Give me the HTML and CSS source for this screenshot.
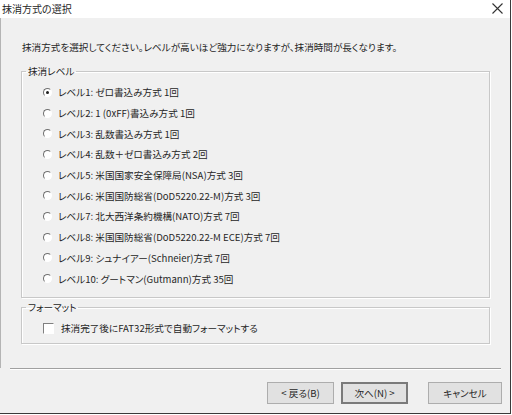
FILE: index.html
```html
<html>
	<head>
		<meta charset="utf-8">
		<link rel="stylesheet" href="styles.css">
	</head>
	<body>
		<div class="window">
			<div class="titlebar">
				<span class="title">抹消方式の選択</span>
				<svg class="close" width="11" height="11" viewBox="0 0 11 11">
					<path d="M0.5 0.5 L10.5 10.5 M10.5 0.5 L0.5 10.5" stroke="#333" stroke-width="1.1" fill="none"/>
				</svg>
			</div>
			<div class="content">
				<div class="intro">抹消方式を選択してください。レベルが高いほど強力になりますが、抹消時間が長くなります。</div>
				<fieldset class="group levels">
					<legend>抹消レベル</legend>
					<div class="option"><span class="radio checked"></span>レベル1: ゼロ書込み方式 1回</div>
					<div class="option"><span class="radio"></span>レベル2: 1 (0xFF)書込み方式 1回</div>
					<div class="option"><span class="radio"></span>レベル3: 乱数書込み方式 1回</div>
					<div class="option"><span class="radio"></span>レベル4: 乱数＋ゼロ書込み方式 2回</div>
					<div class="option"><span class="radio"></span>レベル5: 米国国家安全保障局(NSA)方式 3回</div>
					<div class="option"><span class="radio"></span>レベル6: 米国国防総省(DoD5220.22-M)方式 3回</div>
					<div class="option"><span class="radio"></span>レベル7: 北大西洋条約機構(NATO)方式 7回</div>
					<div class="option"><span class="radio"></span>レベル8: 米国国防総省(DoD5220.22-M ECE)方式 7回</div>
					<div class="option"><span class="radio"></span>レベル9: シュナイアー(Schneier)方式 7回</div>
					<div class="option"><span class="radio"></span>レベル10: グートマン(Gutmann)方式 35回</div>
				</fieldset>
				<fieldset class="group format">
					<legend>フォーマット</legend>
					<div class="option"><span class="check"></span>抹消完了後にFAT32形式で自動フォーマットする</div>
				</fieldset>
			</div>
			<div class="separator"></div>
			<div class="buttons">
				<button class="btn back">&lt; 戻る(B)</button>
				<button class="btn next">次へ(N) &gt;</button>
				<button class="btn cancel">キャンセル</button>
			</div>
		</div>
	</body>
</html>
```
FILE: styles.css
```css
html, body {
	margin: 0;
	padding: 0;
	background: #ffffff;
	font-family: "Noto Sans CJK JP", "Noto Sans", sans-serif;
	color: #262626;
}
.window {
	width: 510px;
	height: 413px;
	background: #f0f0f0;
	border-right: 1px solid #3a3a3a;
	border-bottom: 1px solid #3a3a3a;
	display: flex;
	flex-direction: column;
	box-sizing: content-box;
}
.titlebar {
	height: 18px;
	background: #ffffff;
	display: flex;
	align-items: center;
	justify-content: space-between;
	padding: 0 7px 0 2px;
}
.title {
	font-size: 10px;
	line-height: 12px;
	font-feature-settings: "palt";
}
.close {
	margin-top: -1px;
}
.content {
	flex: 1;
	border-left: 1px solid #b4b4b4;
	padding: 0 0 0 20px;
	font-size: 9.6px;
	font-feature-settings: "palt";
}
.intro {
	margin: 23px 0 0 1px;
	line-height: 12px;
	height: 12px;
}
.group {
	width: 469px;
	margin: 0;
	padding: 0;
	border: 1px solid #c8c8c8;
	box-shadow: inset 1px 1px 0 #ffffff, 1px 1px 0 #ffffff;
	min-inline-size: 0;
}
.group legend {
	font-size: 9.6px;
	line-height: 12px;
	padding: 0 2px;
	margin-left: 4px;
}
.levels {
	margin-top: 12px;
	height: 233px;
	box-sizing: border-box;
	padding-top: 5px;
}
.format {
	margin-top: 3px;
	height: 43px;
	box-sizing: border-box;
	padding-top: 5px;
}
.option {
	height: 20.7px;
	display: flex;
	align-items: center;
	padding-left: 21px;
	white-space: nowrap;
}
.radio {
	width: 7px;
	height: 7px;
	border-radius: 50%;
	border: 1px solid;
	border-color: #707070 #ffffff #ffffff #707070;
	background: #ffffff;
	margin-right: 6px;
	display: flex;
	align-items: center;
	justify-content: center;
}
.radio.checked::after {
	content: "";
	width: 3px;
	height: 3px;
	border-radius: 50%;
	background: #1e1e1e;
}
.check {
	width: 9px;
	height: 9px;
	border: 1px solid;
	border-color: #808080 #ffffff #ffffff #808080;
	background: #ffffff;
	margin-right: 7px;
}
.separator {
	height: 0;
	margin: 0 9px 12px 10px;
	border-top: 1px solid #a0a0a0;
	border-bottom: 1px solid #ffffff;
}
.buttons {
	display: flex;
	padding: 0 0 9px 267px;
	height: 22px;
}
.btn {
	font-family: "Noto Sans CJK JP", "Noto Sans", sans-serif;
	font-size: 9.6px;
	font-feature-settings: "palt";
	color: #262626;
	height: 22px;
	background: #e1e1e1;
	border: 1px solid #adadad;
	padding: 0;
}
.back {
	width: 67px;
}
.next {
	width: 67px;
	margin-left: 7px;
	border: 2px solid #7a7a7a;
}
.cancel {
	width: 74px;
	margin-left: 20px;
}
```
